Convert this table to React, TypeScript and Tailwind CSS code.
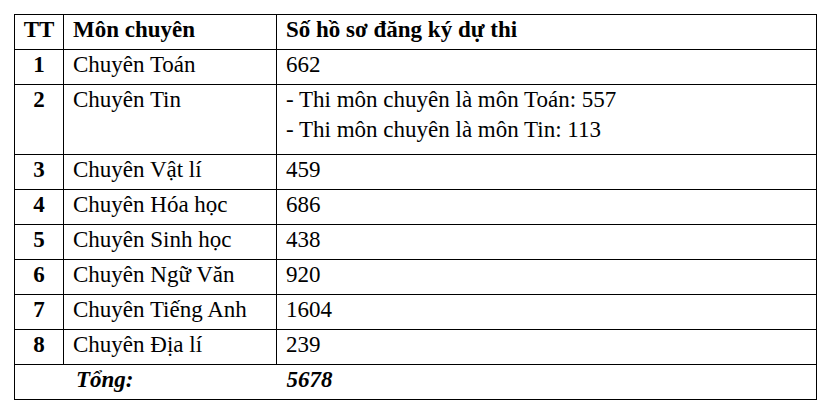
const rows: { tt: string; name: string; lines: string[] }[] = [
  { tt: "1", name: "Chuyên Toán", lines: ["662"] },
  {
    tt: "2",
    name: "Chuyên Tin",
    lines: ["- Thi môn chuyên là môn Toán: 557", "- Thi môn chuyên là môn Tin: 113"],
  },
  { tt: "3", name: "Chuyên Vật lí", lines: ["459"] },
  { tt: "4", name: "Chuyên Hóa học", lines: ["686"] },
  { tt: "5", name: "Chuyên Sinh học", lines: ["438"] },
  { tt: "6", name: "Chuyên Ngữ Văn", lines: ["920"] },
  { tt: "7", name: "Chuyên Tiếng Anh", lines: ["1604"] },
  { tt: "8", name: "Chuyên Địa lí", lines: ["239"] },
];

const cell = "border border-black align-top font-['Liberation_Serif','Times_New_Roman',serif]";

export default function App() {
  return (
    <div className="w-[820px] h-[406px] bg-white pt-[14px] pl-[14px] text-black font-['Liberation_Serif','Times_New_Roman',serif]">
      <table className="table-fixed border-collapse w-[803px] text-[23px] leading-[30px] font-['Liberation_Serif','Times_New_Roman',serif]">
        <colgroup>
          <col className="w-[49px]" />
          <col className="w-[213px]" />
          <col />
        </colgroup>
        <thead>
          <tr>
            <th className={`${cell} h-[35px] text-center font-bold`}>TT</th>
            <th className={`${cell} h-[35px] text-left font-bold pl-[9px]`}>Môn chuyên</th>
            <th className={`${cell} h-[35px] text-left font-bold pl-[9px]`}>
              Số hồ sơ đăng ký dự thi
            </th>
          </tr>
        </thead>
        <tbody>
          {rows.map((r) => (
            <tr key={r.tt}>
              <td
                className={`${cell} text-center font-bold ${
                  r.lines.length > 1 ? "h-[70px]" : "h-[35px]"
                }`}
              >
                {r.tt}
              </td>
              <td className={`${cell} pl-[9px]`}>{r.name}</td>
              <td className={`${cell} pl-[9px]`}>
                {r.lines.map((l) => (
                  <div key={l}>{l}</div>
                ))}
              </td>
            </tr>
          ))}
          <tr>
            <td colSpan={2} className={`${cell} border-r-0 h-[35px] pl-[61px] font-bold italic`}>
              Tổng:
            </td>
            <td className={`${cell} border-l-0 pl-[10px] font-bold italic`}>5678</td>
          </tr>
        </tbody>
      </table>
    </div>
  );
}
